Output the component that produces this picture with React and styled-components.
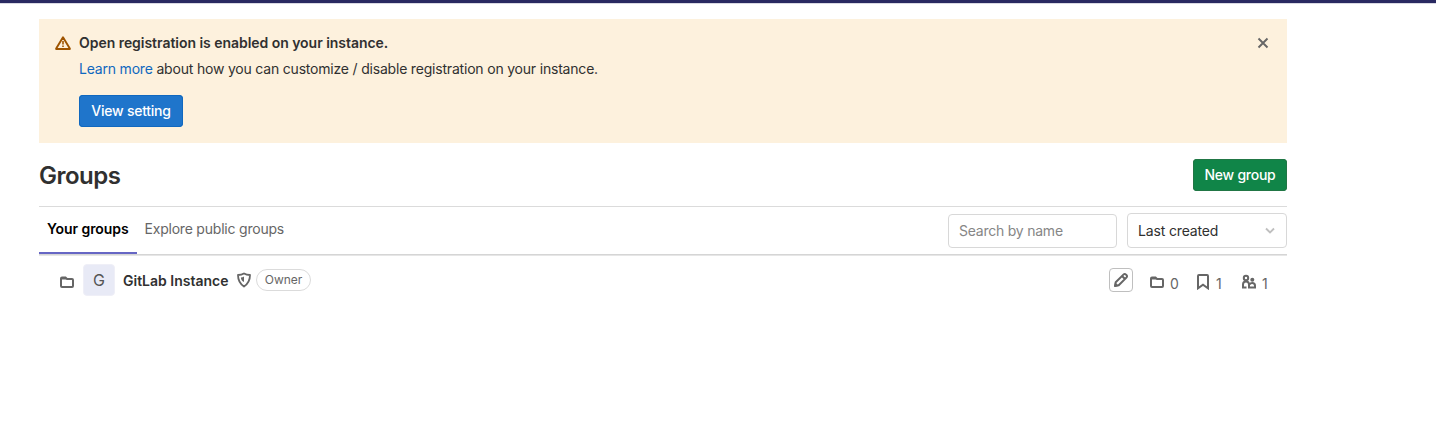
import React from "react";
import styled, { createGlobalStyle } from "styled-components";

const GlobalStyle = createGlobalStyle`
  * { box-sizing: border-box; }
  body {
    margin: 0;
    background: #fff;
    color: #303030;
    font-family: Inter, "Liberation Sans", sans-serif;
    font-size: 14px;
    line-height: 20px;
  }
  h1, h2, p { margin: 0; }
`;

const TopBar = styled.div`
  height: 4px;
  background: #292961;
  border-bottom: 1px solid #d9d9e3;
`;

const Page = styled.main`
  width: 1248px;
  margin: 15px 0 0 39px;
`;

const Alert = styled.section`
  display: flex;
  align-items: flex-start;
  height: 124px;
  padding: 16px;
  background: #fdf1dd;
`;

const AlertBody = styled.div`
  flex: 1;
  padding-left: 8px;
  margin-top: -2px;
`;

const AlertTitle = styled.h2`
  font-size: 14px;
  line-height: 20px;
  font-weight: 600;
  letter-spacing: -0.04px;
  margin-bottom: 6px;
`;

const AlertText = styled.p`
  margin-bottom: 16px;
  letter-spacing: -0.196px;
`;

const Link = styled.a`
  color: #1068bf;
`;

const Button = styled.button`
  display: block;
  width: ${(p) => p.$width}px;
  height: 32px;
  padding: 0;
  border: 0;
  border-radius: 4px;
  background: ${(p) => (p.$green ? "#108548" : "#1f75cb")};
  box-shadow: inset 0 0 0 1px ${(p) => (p.$green ? "#217645" : "#1068bf")};
  color: #fff;
  font: 500 14px/16px Inter, "Liberation Sans", sans-serif;
  letter-spacing: -0.25px;
  white-space: nowrap;
`;

const IconButton = styled.button`
  display: flex;
  padding: 0;
  border: 0;
  background: none;
  color: #666;
`;

const Header = styled.header`
  display: flex;
  align-items: center;
  justify-content: space-between;
  height: 64px;
  border-bottom: 1px solid #dbdbdb;
`;

const Title = styled.h1`
  font-size: 24px;
  line-height: 32px;
  font-weight: 600;
  letter-spacing: -0.5px;
  padding-top: 2px;
`;

const Toolbar = styled.div`
  display: flex;
  justify-content: space-between;
  height: 48px;
  border-bottom: 1px solid #d5d5d5;
  box-shadow: 0 1px 0 #e6e6e6;
`;

const Tabs = styled.nav`
  display: flex;
  height: 47px;
`;

const Tab = styled.a`
  height: 47px;
  min-width: 98px;
  padding: 12px 8px 0;
  white-space: nowrap;
  letter-spacing: ${(p) => (p.$active ? -0.06 : -0.21)}px;
  color: ${(p) => (p.$active ? "#000" : "#666")};
  font-weight: ${(p) => (p.$active ? 600 : 400)};
  border-bottom: ${(p) => (p.$active ? "2px solid #6666c4" : "0")};

  & + & { padding-left: 7.5px; }
`;

const Filters = styled.div`
  display: flex;
  align-items: flex-end;
  height: 41px;
  gap: 10px;
`;

const Search = styled.input`
  width: 169px;
  height: 34px;
  padding: 0 10px 2px;
  border: 1px solid #d8d8d8;
  border-radius: 4px;
  font: 14px/20px Inter, "Liberation Sans", sans-serif;
  letter-spacing: -0.23px;
  &::placeholder { color: #868686; opacity: 1; }
`;

const Sort = styled.div`
  display: flex;
  align-items: center;
  justify-content: space-between;
  width: 160px;
  height: 35px;
  padding: 1px 11px 0 10px;
  border: 1px solid #d8d8d8;
  border-radius: 4px;
  letter-spacing: -0.15px;
`;

const GroupRow = styled.div`
  display: flex;
  align-items: flex-start;
  padding: 9px 17px 0 20px;
  color: #666;
`;

const Slot = styled.span`
  display: flex;
  margin: ${(p) => p.$top || 0}px ${(p) => p.$right || 0}px 0 0;
`;

const Avatar = styled.span`
  width: 32px;
  height: 32px;
  margin-right: 8px;
  border: 1px solid #efeff7;
  border-radius: 4px;
  background: #e8eaf6;
  color: #555;
  font-size: 16px;
  line-height: 31px;
  text-align: center;
`;

const GroupName = styled.a`
  margin: 7px 7px 0 0;
  color: #303030;
  font-weight: 600;
  white-space: nowrap;
`;

const Role = styled.span`
  width: 55px;
  height: 22px;
  margin: 5px auto 0 0;
  padding-left: 1px;
  border: 1px solid #dbdbdb;
  border-radius: 11px;
  font-size: 12px;
  line-height: 20px;
  text-align: center;
`;

const EditButton = styled(IconButton)`
  align-items: center;
  justify-content: center;
  width: 24px;
  height: 24px;
  margin: 4px 16px 0 0;
  border: 1px solid #bfbfbf;
  border-radius: 4px;
`;

const Stat = styled.span`
  display: flex;
  width: ${(p) => p.$width}px;
`;

const Count = styled.span`
  margin: 10px 0 0 5px;
`;

const Icon = ({ children }) => (
  <svg width="16" height="16" viewBox="0 0 16 16" fill="none" stroke="currentColor" strokeWidth="2" aria-hidden="true">
    {children}
  </svg>
);

const WarningIcon = () => (
  <svg width="16" height="16" viewBox="0 0 16 16" fill="none" stroke="#9e5400" aria-hidden="true">
    <path d="M8 2.2 14.8 13.4Q15.1 14 14.4 14H1.6Q.9 14 1.2 13.4Z" strokeWidth="1.9" strokeLinejoin="round" />
    <path d="M8 6v3.500M8 10.500v1.500" strokeWidth="1.600" />
  </svg>
);

const FolderIcon = () => (
  <Icon>
    <path d="M2 5v7q0 1 1 1h10q1 0 1-1V6q0-1-1-1H8L6.500 3.500H3Q2 3.500 2 4.500Z" />
    <path d="M2 4.500h5" />
  </Icon>
);

const ShieldIcon = () => (
  <Icon>
    <path d="M8 1.500c1.800 1.100 3.800 1.500 6 1.500 0 5-1.800 8.700-6 11.500C3.800 11.700 2 8 2 3c2.200 0 4.200-.4 6-1.500Z" strokeWidth="1.800" strokeLinejoin="round" />
    <path d="M8 4.500v5.500C6 9 5 7.500 4.900 5.500Q6.600 5.300 8 4.500Z" fill="currentColor" stroke="none" />
  </Icon>
);

const PencilIcon = () => (
  <Icon>
    <path d="m2 14 .7-3.700 7.700-7.700q1.300-1.300 2.600 0l.4.4q1.300 1.300 0 2.600l-7.700 7.700ZM9 4l3 3" strokeWidth="2" strokeLinejoin="round" />
    <path d="m1.200 14.800.9-4.600 3.700 3.700Z" fill="currentColor" stroke="none" />
  </Icon>
);

const BookmarkIcon = () => (
  <Icon>
    <path d="M3 1.900Q3 1 3.900 1h8.200q.9 0 .9.900V14.300L8 10.800l-5 3.500Z" />
  </Icon>
);

const UsersIcon = () => (
  <Icon>
    <circle cx="5" cy="4" r="2.200" />
    <path d="M2 13.800V10.500q0-3 3-3t3 3v3.300M1 13.500h4.500" />
    <circle cx="11.300" cy="5.800" r="2" fill="currentColor" stroke="none" />
    <path d="M8.500 10.300q1-1.200 2.700-1.200 2.800 0 2.800 2.700v2M7 13.500h8" />
  </Icon>
);

export default function App() {
  return (
    <>
      <GlobalStyle />
      <TopBar />
      <Page>
        <Alert>
          <WarningIcon />
          <AlertBody>
            <AlertTitle>Open registration is enabled on your instance.</AlertTitle>
            <AlertText>
              <Link>Learn more</Link> about how you can customize / disable registration on your instance.
            </AlertText>
            <Button $width={104}>View setting</Button>
          </AlertBody>
          <IconButton aria-label="Dismiss">
            <Icon><path d="m3.500 3.500 9 9m0-9-9 9" strokeWidth="1.900" /></Icon>
          </IconButton>
        </Alert>
        <Header>
          <Title>Groups</Title>
          <Button $green $width={94}>New group</Button>
        </Header>
        <Toolbar>
          <Tabs>
            <Tab $active>Your groups</Tab>
            <Tab>Explore public groups</Tab>
          </Tabs>
          <Filters>
            <Search placeholder="Search by name" />
            <Sort>
              Last created
              <svg width="10" height="10" viewBox="0 0 10 10" fill="none" stroke="#bfbfbf" strokeWidth="1.900">
                <path d="m1 2.500 4 4 4-4" />
              </svg>
            </Sort>
          </Filters>
        </Toolbar>
        <GroupRow>
          <Slot $top={10} $right={8}><FolderIcon /></Slot>
          <Avatar>G</Avatar>
          <GroupName>GitLab Instance</GroupName>
          <Slot $top={8} $right={4}><ShieldIcon /></Slot>
          <Role>Owner</Role>
          <EditButton aria-label="Edit"><PencilIcon /></EditButton>
          <Stat $width={46}><Slot $top={10}><FolderIcon /></Slot><Count>0</Count></Stat>
          <Stat $width={46}><Slot $top={10}><BookmarkIcon /></Slot><Count>1</Count></Stat>
          <Stat $width={29}><Slot $top={10}><UsersIcon /></Slot><Count>1</Count></Stat>
        </GroupRow>
      </Page>
    </>
  );
}
